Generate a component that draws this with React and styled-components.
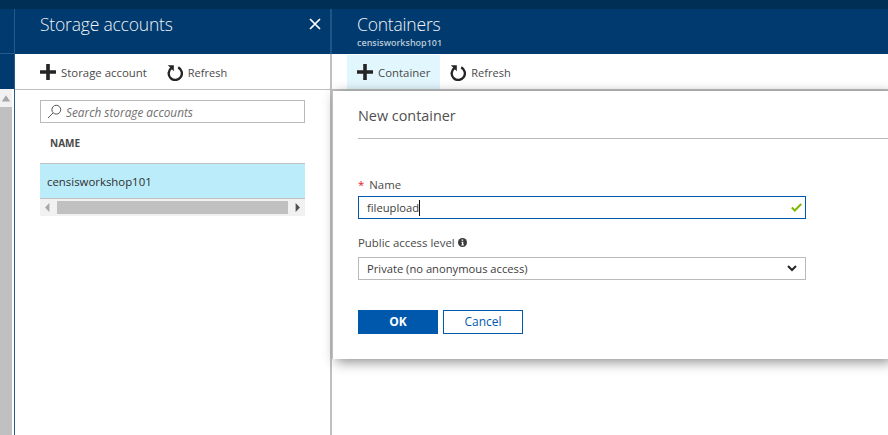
import React from 'react';
import styled, { createGlobalStyle } from 'styled-components';

const GlobalStyle = createGlobalStyle`
    html, body { margin: 0; padding: 0; background: #fff; overflow: hidden; }
    #root { width: 888px; height: 435px; }
`;

const PlusIcon = () => <svg width="16" height="16" viewBox="0 0 16 16"><path d="M6.2 0h3.6v6.2H16v3.6H9.8V16H6.2V9.8H0V6.2h6.2z" fill="#252525" /></svg>;

const RefreshIcon = () => <svg width="16" height="17" viewBox="0 0 16 17">
    <path d="M4.4 4A6.6 6.6 0 1 0 11.2 3.4" fill="none" stroke="#252525" strokeWidth="2.4" />
    <path d="M0.8 1.2h6v6z" fill="#252525" />
</svg>;

const App = () => {
    return <Page>
        <GlobalStyle />
        <TopBar />
        <Columns>
            <LeftEdge>
                <EdgeHeader>
                    <EdgeDivider />
                </EdgeHeader>
                <EdgeScroll>
                    <EdgeArrow />
                    <EdgeThumb />
                </EdgeScroll>
            </LeftEdge>
            <AccountsBlade>
                <BladeHeader $divider>
                    <TitleRow>
                        <BladeTitle>Storage accounts</BladeTitle>
                        <CloseButton>
                            <svg width="12" height="12" viewBox="0 0 12 12"><path d="M1 1l10 10M11 1L1 11" stroke="#fff" strokeWidth="1.7" /></svg>
                        </CloseButton>
                    </TitleRow>
                </BladeHeader>
                <Toolbar $divider>
                    <ToolButton><PlusIcon /><span>Storage account</span></ToolButton>
                    <ToolButton><RefreshIcon /><RefreshLabel>Refresh</RefreshLabel></ToolButton>
                </Toolbar>
                <AccountsBody>
                    <SearchBox>
                        <svg width="15" height="15" viewBox="0 0 15 15"><circle cx="9.3" cy="5.7" r="4.4" fill="none" stroke="#555" /><path d="M6 9L1 14" stroke="#555" /></svg>
                        <span>Search storage accounts</span>
                    </SearchBox>
                    <ColumnHead>NAME</ColumnHead>
                    <AccountRow>censisworkshop101</AccountRow>
                    <HScroll>
                        <ScrollArrow $dir="left" />
                        <HThumb />
                        <ScrollArrow $dir="right" />
                    </HScroll>
                </AccountsBody>
            </AccountsBlade>
            <ContainersBlade>
                <BladeHeader>
                    <BladeTitle>Containers</BladeTitle>
                    <BladeSub>censisworkshop101</BladeSub>
                </BladeHeader>
                <Toolbar $tight>
                    <ToolButton $active><PlusIcon /><span>Container</span></ToolButton>
                    <ToolButton><RefreshIcon /><RefreshLabel>Refresh</RefreshLabel></ToolButton>
                </Toolbar>
                <Dialog>
                    <DialogTitle>New container</DialogTitle>
                    <FieldLabel $first><Star>*</Star>Name</FieldLabel>
                    <FieldBox $focus>
                        <FieldText>fileupload<Caret /></FieldText>
                        <svg width="11" height="9" viewBox="0 0 11 9"><path d="M.8 4.5l3 3L10.2 1" fill="none" stroke="#7fba00" strokeWidth="2" /></svg>
                    </FieldBox>
                    <FieldLabel>
                        Public access level
                        <svg width="9" height="9" viewBox="0 0 9 9"><circle cx="4.5" cy="4.5" r="4.5" fill="#3a3a3a" /><path d="M3.6 1.5h1.6v1.3H3.6zM3.4 3.7h1.9v2.7h.6v1.1H3.3V6.4h.7V4.7h-.6z" fill="#fff" /></svg>
                    </FieldLabel>
                    <FieldBox>
                        <FieldText>Private (no anonymous access)</FieldText>
                        <svg width="10" height="7" viewBox="0 0 10 7"><path d="M1 1l4 4 4-4" fill="none" stroke="#252525" strokeWidth="2" /></svg>
                    </FieldBox>
                    <Actions>
                        <OkButton>OK</OkButton>
                        <CancelButton>Cancel</CancelButton>
                    </Actions>
                </Dialog>
            </ContainersBlade>
        </Columns>
    </Page>
};

const Page = styled.div`
    width: 888px;
    height: 435px;
    display: flex;
    flex-direction: column;
    overflow: hidden;
    font-family: "Open Sans", "Liberation Sans", sans-serif;
    color: #3c3c3c;
`;

const TopBar = styled.div`
    height: 9px;
    flex: none;
    background: #002f56;
`;

const Columns = styled.div`
    flex: 1;
    display: flex;
    min-height: 0;
`;

const LeftEdge = styled.div`
    width: 15px;
    flex: none;
    display: flex;
    flex-direction: column;
    border-right: 1px solid #245b8a;
    box-sizing: border-box;
`;

const EdgeHeader = styled.div`
    height: 80px;
    flex: none;
    background: #003a6e;
`;

const EdgeDivider = styled.div`
    height: 44px;
    border-bottom: 1px solid #245b8a;
`;

const EdgeScroll = styled.div`
    flex: 1;
    width: 12px;
    display: flex;
    flex-direction: column;
    background: #f1f1f1;
`;

const EdgeArrow = styled.div`
    height: 18px;
    flex: none;
    background: #a6a6a6;
    clip-path: polygon(50% 35%, 85% 70%, 15% 70%);
`;

const EdgeThumb = styled.div`
    flex: 1;
    background: #c0c0c0;
`;

const AccountsBlade = styled.div`
    width: 317px;
    flex: none;
    display: flex;
    flex-direction: column;
`;

const ContainersBlade = styled.div`
    flex: 1;
    min-width: 0;
    display: flex;
    flex-direction: column;
`;

const BladeHeader = styled.div`
    height: 45px;
    flex: none;
    background: #003a6e;
    padding: 5px 0 0 25px;
    box-sizing: border-box;
    color: #f0f4f8;
    border-right: ${props => props.$divider ? '2px solid #1f5485' : 'none'};
`;

const TitleRow = styled.div`
    display: flex;
    justify-content: space-between;
    align-items: center;
    padding-right: 9px;
`;

const BladeTitle = styled.div`
    font-size: 17.5px;
    line-height: 21px;
    letter-spacing: -0.2px;
    font-weight: 300;
`;

const BladeSub = styled.div`
    font-size: 9px;
    line-height: 11px;
    margin-top: 2px;
    font-weight: 600;
    color: #b9c9d8;
`;

const CloseButton = styled.div`
    width: 12px;
    height: 12px;
    display: flex;
    margin-top: -2px;
`;

const Toolbar = styled.div`
    height: ${props => props.$tight ? '37px' : '36px'};
    flex: none;
    display: flex;
    align-items: stretch;
    padding: 1px 0 0 ${props => props.$tight ? '15px' : '25px'};
    gap: ${props => props.$tight ? '0' : '20px'};
    border-bottom: ${props => props.$tight ? '2px' : '1px'} solid #c0c0c0;
    border-right: ${props => props.$divider ? '2px solid #c0c0c0' : 'none'};
    box-sizing: border-box;
`;

const ToolButton = styled.div`
    display: flex;
    align-items: center;
    gap: 5px;
    padding: 0 ${props => props.$active ? '10px' : '0'};
    margin-right: ${props => props.$active ? '10px' : '0'};
    font-size: 11.4px;
    color: #4a4a4a;
    background: ${props => props.$active ? '#e2f6fd' : 'transparent'};
`;

const RefreshLabel = styled.span`
    font-size: 11px;
`;

const AccountsBody = styled.div`
    flex: 1;
    padding: 10px 25px 0;
    display: flex;
    flex-direction: column;
    border-right: 2px solid #c0c0c0;
`;

const SearchBox = styled.div`
    height: 23px;
    display: flex;
    align-items: center;
    gap: 4px;
    padding-left: 6px;
    box-sizing: border-box;
    border: 1px solid #bababa;
    font-size: 11.8px;
    font-style: italic;
    color: #707070;
`;

const ColumnHead = styled.div`
    height: 40px;
    padding-left: 10px;
    line-height: 41px;
    font-size: 10px;
    font-weight: 700;
    color: #4a4a4a;
`;

const AccountRow = styled.div`
    height: 36px;
    line-height: 35px;
    padding-left: 7px;
    box-sizing: border-box;
    border-top: 1px solid #c0c0c0;
    border-bottom: 1px solid #c0c0c0;
    background: #bbecfa;
    font-size: 11.4px;
    color: #2f2f2f;
`;

const HScroll = styled.div`
    height: 17px;
    display: flex;
    align-items: center;
    background: #f1f1f1;
`;

const HThumb = styled.div`
    flex: 1;
    height: 13px;
    background: #c0c0c0;
`;

const ScrollArrow = styled.div`
    width: 17px;
    height: 9px;
    flex: none;
    background: ${props => props.$dir === 'left' ? '#a6a6a6' : '#505050'};
    clip-path: ${props => props.$dir === 'left'
        ? 'polygon(55% 0, 55% 100%, 30% 50%)'
        : 'polygon(45% 0, 45% 100%, 70% 50%)'};
`;

const Dialog = styled.div`
    width: 556px;
    height: 268px;
    padding: 0 0 0 25px;
    box-sizing: border-box;
    background: #fff;
    box-shadow: 4px 3px 12px rgba(0, 0, 0, 0.45);
    border-left: 1px solid #c0c0c0;
`;

const DialogTitle = styled.div`
    height: 48px;
    line-height: 49px;
    box-sizing: border-box;
    font-size: 14.4px;
    color: #505050;
    border-bottom: 1px solid #b9b9b9;
`;

const FieldLabel = styled.div`
    display: flex;
    align-items: center;
    gap: 3px;
    height: 17px;
    margin-top: ${props => props.$first ? '37px' : '15px'};
    margin-bottom: ${props => props.$first ? '3px' : '6px'};
    font-size: 11.4px;
    color: #4a4a4a;
`;

const Star = styled.span`
    color: #e81123;
    margin-right: 2px;
`;

const FieldBox = styled.div`
    width: 448px;
    height: 23px;
    display: flex;
    align-items: center;
    justify-content: space-between;
    padding: 0 ${props => props.$focus ? '3px' : '8px'} 0 8px;
    box-sizing: border-box;
    border: 1px solid ${props => props.$focus ? '#0058ad' : '#bababa'};
    font-size: 11.2px;
`;

const FieldText = styled.span`
    display: flex;
    align-items: center;
    color: #3c3c3c;
`;

const Caret = styled.span`
    width: 1px;
    height: 16px;
    background: #111;
`;

const Actions = styled.div`
    display: flex;
    gap: 5px;
    margin-top: 30px;
`;

const OkButton = styled.div`
    width: 80px;
    height: 24px;
    line-height: 24px;
    text-align: center;
    background: #0058ad;
    color: #fff;
    font-size: 12px;
    font-weight: 700;
`;

const CancelButton = styled.div`
    width: 80px;
    height: 24px;
    line-height: 22px;
    text-align: center;
    box-sizing: border-box;
    border: 1px solid #0058ad;
    color: #0058ad;
    font-size: 12px;
`;

export default App;
